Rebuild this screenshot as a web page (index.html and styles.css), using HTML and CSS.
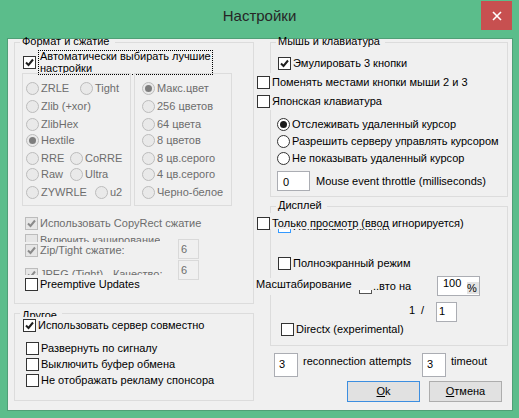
FILE: index.html
```html
<!DOCTYPE html>
<html lang="ru">
<head>
<meta charset="utf-8">
<title>Настройки</title>
<link rel="stylesheet" href="styles.css">
</head>
<body>
<div class="window">
  <header class="titlebar">
    <div class="title">Настройки</div>
    <div class="close"><svg viewBox="0 0 10 10" width="10" height="10"><path d="M1 1L9 9M9 1L1 9"/></svg></div>
  </header>
  <main class="client">
    <div class="col col-left">
      <section class="group g-format">
        <div class="legend">Формат и сжатие</div>
        <div class="auto-row">
          <span class="cb"><svg class="tick" viewBox="0 0 11 11"><path d="M2 5.5L4.5 8L9 2.5"/></svg></span>
          <div class="focus"><div class="focus-text">Автоматически выбирать лучшие<br>настройки</div></div>
        </div>
        <div class="boxes">
          <div class="box box-enc">
            <div class="rrow"><div class="rad dis w54"><span class="rb"></span>ZRLE</div><div class="rad dis"><span class="rb"></span>Tight</div></div>
            <div class="rrow s5"><div class="rad dis"><span class="rb"></span>Zlib (+xor)</div></div>
            <div class="rrow s5"><div class="rad dis"><span class="rb"></span>ZlibHex</div></div>
            <div class="rrow s3"><div class="rad dis"><span class="rb on"></span>Hextile</div></div>
            <div class="rrow s5"><div class="rad dis w44"><span class="rb"></span>RRE</div><div class="rad dis"><span class="rb"></span>CoRRE</div></div>
            <div class="rrow s3"><div class="rad dis w44"><span class="rb"></span>Raw</div><div class="rad dis"><span class="rb"></span>Ultra</div></div>
            <div class="rrow s5"><div class="rad dis w69"><span class="rb"></span>ZYWRLE</div><div class="rad dis"><span class="rb"></span>u2</div></div>
          </div>
          <div class="box box-col">
            <div class="rrow"><div class="rad dis"><span class="rb on"></span>Макс.цвет</div></div>
            <div class="rrow s5"><div class="rad dis"><span class="rb"></span>256 цветов</div></div>
            <div class="rrow s5"><div class="rad dis"><span class="rb"></span>64 цвета</div></div>
            <div class="rrow s3"><div class="rad dis"><span class="rb"></span>8 цветов</div></div>
            <div class="rrow s5"><div class="rad dis"><span class="rb"></span>8 цв.серого</div></div>
            <div class="rrow s3"><div class="rad dis"><span class="rb"></span>4 цв.серого</div></div>
            <div class="rrow s5"><div class="rad dis"><span class="rb"></span>Черно-белое</div></div>
          </div>
        </div>
        <div class="chk dis copyrect"><span class="cb"><svg class="tick" viewBox="0 0 11 11"><path d="M2 5.5L4.5 8L9 2.5"/></svg></span>Использовать CopyRect сжатие</div>
        <div class="clip clip-cache"><div class="chk dis"><span class="cb"></span>Включить кэширование</div></div>
        <div class="edit-row zip-row">
          <div class="chk dis"><span class="cb"><svg class="tick" viewBox="0 0 11 11"><path d="M2 5.5L4.5 8L9 2.5"/></svg></span>Zip/Tight сжатие:</div>
          <div class="edit dis e6">6</div>
        </div>
        <div class="edit-row jpeg-row">
          <div class="clip clip-jpeg"><div class="chk dis"><span class="cb"><svg class="tick" viewBox="0 0 11 11"><path d="M2 5.5L4.5 8L9 2.5"/></svg></span>JPEG (Tight) - Качество:</div></div>
          <div class="edit dis e6">6</div>
        </div>
        <div class="chk preempt"><span class="cb"></span>Preemptive Updates</div>
      </section>

      <section class="group g-other">
        <div class="legend legend-clip">Другое</div>
        <div class="chk share"><span class="cb"><svg class="tick" viewBox="0 0 11 11"><path d="M2 5.5L4.5 8L9 2.5"/></svg></span>Использовать сервер совместно</div>
        <div class="chk other-row first"><span class="cb"></span>Развернуть по сигналу</div>
        <div class="chk other-row"><span class="cb"></span>Выключить буфер обмена</div>
        <div class="chk other-row"><span class="cb"></span>Не отображать рекламу спонсора</div>
      </section>
    </div>

    <div class="col col-right">
      <section class="group g-mouse">
        <div class="legend">Мышь и клавиатура</div>
        <div class="chk emu"><span class="cb"><svg class="tick" viewBox="0 0 11 11"><path d="M2 5.5L4.5 8L9 2.5"/></svg></span>Эмулировать 3 кнопки</div>
        <div class="cover cover-a"><div class="chk"><span class="cb"></span>Поменять местами кнопки мыши 2 и 3</div></div>
        <div class="cover cover-b"><div class="chk"><span class="cb"></span>Японская клавиатура</div></div>
        <div class="rad cursor-rad first"><span class="rb on"></span>Отслеживать удаленный курсор</div>
        <div class="rad cursor-rad"><span class="rb"></span>Разрешить серверу управлять курсором</div>
        <div class="rad cursor-rad"><span class="rb"></span>Не показывать удаленный курсор</div>
        <div class="throttle">
          <div class="edit e0">0</div>
          <div class="throttle-label">Mouse event throttle (milliseconds)</div>
        </div>
      </section>

      <section class="group g-display">
        <div class="legend">Дисплей</div>
        <div class="cover cover-view"><div class="chk"><span class="cb"></span>Только просмотр (ввод игнорируется)</div></div>
        <div class="clip clip-hidden"><div class="chk"><span class="cb hot"></span>Показывать кнопки</div></div>
        <div class="chk full"><span class="cb"></span>Полноэкранный режим</div>
        <div class="scale-row">
          <div class="scale-label">Масштабирование</div>
          <div class="clip clip-auto"><span class="cb"></span></div>
          <div class="vto">..вто</div>
          <div class="na">на</div>
          <div class="edit e100"><span class="num">100</span><span class="pct">%</span></div>
        </div>
        <div class="ratio-row">
          <div class="r1">1</div>
          <div class="rslash">/</div>
          <div class="edit e1">1</div>
        </div>
        <div class="chk directx"><span class="cb"></span>Directx (experimental)</div>
      </section>

      <div class="retry">
        <div class="edit e3">3</div>
        <div class="retry-label">reconnection attempts</div>
        <div class="edit e3">3</div>
        <div class="timeout-label">timeout</div>
      </div>

      <div class="buttons">
        <div class="btn default"><u>O</u>k</div>
        <div class="btn"><u>О</u>тмена</div>
      </div>
    </div>
  </main>
</div>
</body>
</html>
```

FILE: styles.css
```css
* { box-sizing: border-box; }
html, body { margin: 0; padding: 0; }
body {
  width: 519px; height: 418px; overflow: hidden;
  background: #5bbd8b;
  font-family: "Liberation Sans", Arial, sans-serif;
  font-size: 11px; color: #000;
}
.window { width: 519px; height: 418px; display: flex; flex-direction: column; background: #5bbd8b; }

.titlebar { height: 38px; flex: none; display: grid; grid-template-columns: 1fr auto 1fr; align-items: start; }
.title { grid-column: 2; font-size: 15px; line-height: 20px; padding-top: 6px; color: #262626; white-space: nowrap; }
.close {
  grid-column: 3; justify-self: end;
  width: 31px; height: 29px; margin: 1px 7px 0 0;
  background: #c75050; display: flex; align-items: center; justify-content: center;
}
.close svg { display: block; }
.close path { stroke: #fff; stroke-width: 1.6; fill: none; }

.client {
  flex: none; height: 373px;
  margin: 0 6px 7px 7px;
  border: 1px solid #4f9f76;
  background: #f0f0f0;
  display: flex; align-items: flex-start;
  padding: 3px 4px 0 6px;
}
.col { display: flex; flex-direction: column; flex: none; }
.col-left { width: 240px; }
.col-right { width: 238px; margin-left: 16px; }

.group { border: 1px solid #dcdcdc; display: flex; flex-direction: column; align-items: flex-start; flex: none; }
.g-format { height: 262px; }
.g-other { height: 88px; margin-top: 9px; }
.g-mouse { height: 155px; }
.g-display { height: 140px; margin-top: 9px; }

.legend {
  margin: -9px 0 0 5px; padding: 0 5px 0 2px;
  height: 14px; line-height: 14px; white-space: nowrap; flex: none;
  background: linear-gradient(transparent 5px, #f0f0f0 5px);
}
.legend-clip { margin-top: -6px; height: 9px; overflow: hidden; }

.chk, .rad { display: flex; align-items: center; height: 13px; line-height: 13px; white-space: nowrap; flex: none; }
.cb {
  width: 13px; height: 13px; flex: none; margin-right: 2px;
  border: 1px solid #333; background: #fff;
  display: flex; align-items: center; justify-content: center;
}
.tick { width: 11px; height: 11px; display: block; }
.tick path { fill: none; stroke: #1e1e1e; stroke-width: 2; }
.cb.hot { border-color: #3399ff; }
.rb {
  width: 13px; height: 13px; flex: none; margin-right: 2px;
  border: 1px solid #333; border-radius: 50%; background: #fff;
  display: flex; align-items: center; justify-content: center;
}
.rb.on::after { content: ""; width: 7px; height: 7px; border-radius: 50%; background: #1a1a1a; }

.dis { color: #6d6d6d; }
.dis .cb { border-color: #bcbcbc; background: #e6e6e6; }
.dis .tick path { stroke: #8a8a8a; }
.dis .rb { border-color: #bcbcbc; background: #e9e9e9; }
.dis .rb.on::after { background: #7d7d7d; }

.rrow { display: flex; }
.s5 { margin-top: 5px; }
.s3 { margin-top: 3px; }
.w54 { width: 54px; }
.w44 { width: 44px; }
.w69 { width: 69px; }

.auto-row { display: flex; align-items: flex-start; margin: 2px 0 0 8px; flex: none; }
.auto-row .cb { margin: 6px 0 0 0; }
.focus { margin-left: 2px; width: 175px; height: 25px; border: 1px dotted #000; padding: 0 1px; line-height: 12px; white-space: nowrap; }
.focus-text { margin-top: -1px; }

.boxes { display: flex; gap: 3px; margin: -2px 0 0 7px; flex: none; }
.box { border: 1px solid #dcdcdc; height: 133px; display: flex; flex-direction: column; }
.box-enc { width: 109px; padding: 8px 0 0 3px; }
.box-col { width: 98px; padding: 8px 0 0 7px; }

.copyrect { margin: 11px 0 0 10px; }
.clip { overflow: hidden; flex: none; }
.clip-cache { height: 8px; margin: 4px 0 0 10px; }
.edit-row { display: flex; align-items: flex-start; margin-left: 10px; flex: none; }
.zip-row { height: 20px; }
.zip-row .chk { width: 153px; margin-top: 2px; }
.jpeg-row { height: 13px; }
.clip-jpeg { width: 153px; height: 13px; }
.clip-jpeg .chk { margin-top: 6px; }
.edit { border: 1px solid #abadb3; background: #fff; line-height: 13px; white-space: nowrap; flex: none; }
.edit.dis { border-color: #d9d9d9; background: #f0f0f0; }
.e6 { width: 21px; height: 20px; padding: 3px 0 0 2px; }
.zip-row .e6 { margin-top: -3px; }
.jpeg-row .e6 { margin-top: -2px; }
.preempt { margin: 3px 0 0 10px; }

.share { margin: 2px 0 0 8px; }
.other-row { margin: 3px 0 0 11px; }
.other-row.first { margin-top: 10px; }

.emu { margin: 9px 0 0 7px; }
.cover { background: #f0f0f0; margin-left: -14px; padding-top: 3px; flex: none; }
.cover-a { height: 19px; margin-top: 3px; }
.cover-b { height: 18px; }
.cursor-rad { margin: 4px 0 0 6px; }
.cursor-rad.first { margin-top: 8px; }
.throttle { display: flex; align-items: flex-start; margin: 6px 0 0 6px; flex: none; }
.e0 { width: 33px; height: 20px; padding: 4px 0 0 5px; }
.throttle-label { margin: 4px 0 0 6px; line-height: 13px; white-space: nowrap; }

.cover-view { height: 16px; padding-top: 4px; margin-top: 1px; }
.clip-hidden { height: 4px; margin-left: 7px; }
.clip-hidden .chk { margin-top: -9px; }
.full { margin: 24px 0 0 7px; }
.scale-row { display: flex; align-items: flex-start; height: 20px; margin: 6px 0 0 -15px; flex: none; }
.scale-label { width: 103px; background: #f0f0f0; margin-top: 2px; padding-bottom: 4px; line-height: 13px; white-space: nowrap; }
.clip-auto { width: 13px; height: 4px; margin-top: 14px; }
.clip-auto .cb { margin: -9px 0 0 0; border-color: #555; }
.vto { width: 26px; margin: 4px 0 0 1px; line-height: 13px; white-space: nowrap; }
.na { width: 38px; margin-top: 4px; line-height: 13px; }
.e100 { width: 43px; height: 20px; display: flex; align-items: flex-start; padding-left: 5px; }
.pct { margin-left: auto; margin-top: 5px; width: 12px; height: 12px; background: #e3e3e3; line-height: 12px; }
.ratio-row { display: flex; align-items: flex-start; height: 20px; margin: 6px 0 0 138px; flex: none; }
.r1 { width: 12px; margin-top: 2px; line-height: 13px; }
.rslash { width: 15px; margin-top: 2px; line-height: 13px; }
.e1 { width: 21px; height: 20px; padding: 2px 0 0 2px; }
.directx { margin: 1px 0 0 10px; }

.retry { display: flex; align-items: flex-start; margin: 7px 0 0 4px; flex: none; }
.e3 { width: 24px; height: 24px; padding: 4px 0 0 4px; }
.retry-label { width: 119px; margin: 2px 0 0 5px; line-height: 13px; white-space: nowrap; }
.timeout-label { margin: 2px 0 0 5px; line-height: 13px; white-space: nowrap; }

.buttons { display: flex; justify-content: flex-end; gap: 9px; margin-top: 4px; padding-right: 6px; flex: none; }
.btn {
  width: 73px; height: 21px; flex: none;
  border: 1px solid #adadad; background: #e1e1e1;
  display: flex; align-items: center; justify-content: center; line-height: 13px;
}
.btn.default { border-color: #3c8ee0; }
```
